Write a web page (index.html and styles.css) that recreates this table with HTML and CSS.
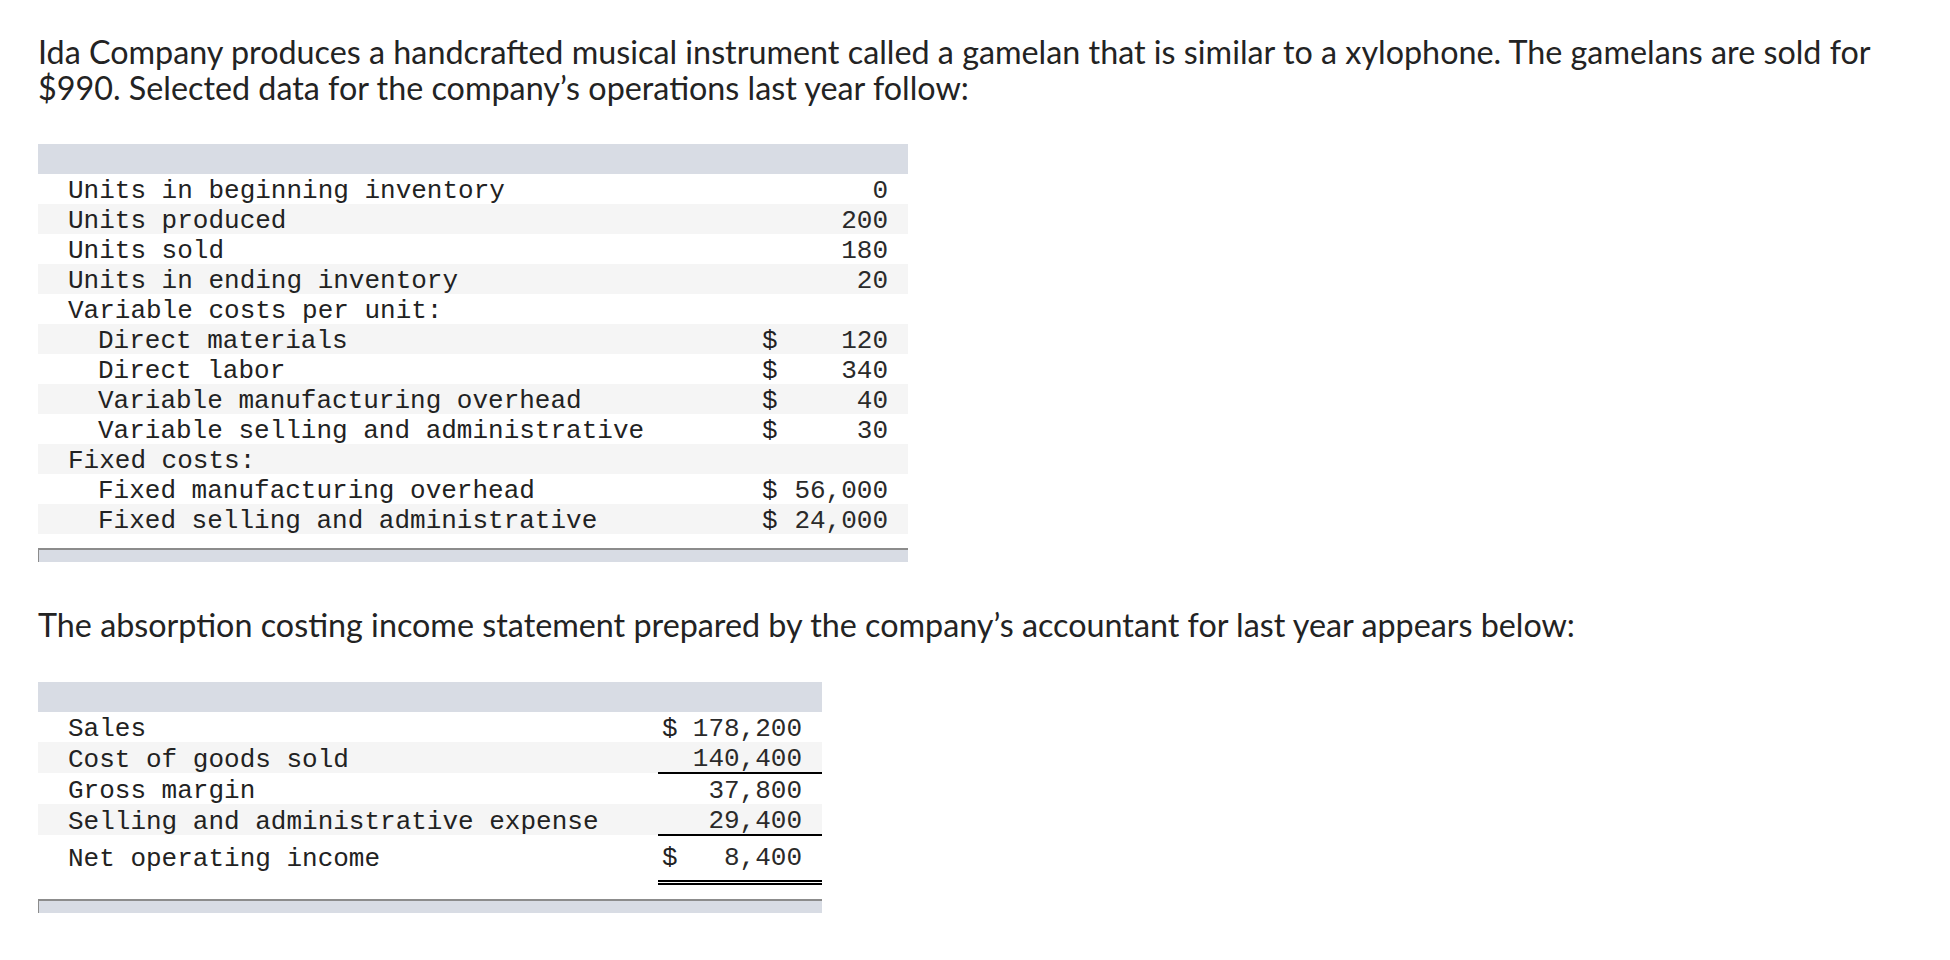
FILE: index.html
```html
<!DOCTYPE html>
<html>
<head>
<meta charset="utf-8">
<link rel="stylesheet" href="styles.css">
</head>
<body>
<div class="page">
  <p class="para para-first">Ida Company produces a handcrafted musical instrument called a gamelan that is similar to a xylophone. The gamelans are sold for $990. Selected data for the company’s operations last year follow:</p>

  <div class="tbl tbl-data">
    <div class="band"></div>
    <table>
      <colgroup><col class="c-lbl"><col class="c-val"></colgroup>
      <tr><td class="lbl">Units in beginning inventory</td><td class="val"><div class="v"><span class="cur"></span><span class="num">0</span></div></td></tr>
      <tr class="alt"><td class="lbl">Units produced</td><td class="val"><div class="v"><span class="cur"></span><span class="num">200</span></div></td></tr>
      <tr><td class="lbl">Units sold</td><td class="val"><div class="v"><span class="cur"></span><span class="num">180</span></div></td></tr>
      <tr class="alt"><td class="lbl">Units in ending inventory</td><td class="val"><div class="v"><span class="cur"></span><span class="num">20</span></div></td></tr>
      <tr><td class="lbl">Variable costs per unit:</td><td class="val"></td></tr>
      <tr class="alt"><td class="lbl ind">Direct materials</td><td class="val"><div class="v"><span class="cur">$</span><span class="num">120</span></div></td></tr>
      <tr><td class="lbl ind">Direct labor</td><td class="val"><div class="v"><span class="cur">$</span><span class="num">340</span></div></td></tr>
      <tr class="alt"><td class="lbl ind">Variable manufacturing overhead</td><td class="val"><div class="v"><span class="cur">$</span><span class="num">40</span></div></td></tr>
      <tr><td class="lbl ind">Variable selling and administrative</td><td class="val"><div class="v"><span class="cur">$</span><span class="num">30</span></div></td></tr>
      <tr class="alt"><td class="lbl">Fixed costs:</td><td class="val"></td></tr>
      <tr><td class="lbl ind">Fixed manufacturing overhead</td><td class="val"><div class="v"><span class="cur">$</span><span class="num">56,000</span></div></td></tr>
      <tr class="alt"><td class="lbl ind">Fixed selling and administrative</td><td class="val"><div class="v"><span class="cur">$</span><span class="num">24,000</span></div></td></tr>
    </table>
    <div class="foot"></div>
  </div>

  <p class="para para-second">The absorption costing income statement prepared by the company’s accountant for last year appears below:</p>

  <div class="tbl tbl-income">
    <div class="band"></div>
    <table>
      <colgroup><col class="c-lbl"><col class="c-val"></colgroup>
      <tr><td class="lbl">Sales</td><td class="val"><div class="v"><span class="cur">$</span><span class="num">178,200</span></div></td></tr>
      <tr class="alt"><td class="lbl">Cost of goods sold</td><td class="val single"><div class="v"><span class="cur"></span><span class="num">140,400</span></div></td></tr>
      <tr><td class="lbl">Gross margin</td><td class="val"><div class="v"><span class="cur"></span><span class="num">37,800</span></div></td></tr>
      <tr class="alt"><td class="lbl">Selling and administrative expense</td><td class="val single"><div class="v"><span class="cur"></span><span class="num">29,400</span></div></td></tr>
      <tr class="total"><td class="lbl">Net operating income</td><td class="val double"><div class="v"><span class="cur">$</span><span class="num">8,400</span></div></td></tr>
    </table>
    <div class="foot"></div>
  </div>
</div>
</body>
</html>
```

FILE: styles.css
```css
html, body {
  margin: 0;
  padding: 0;
  background: #ffffff;
}

.page {
  padding: 34px 38px 0 38px;
  color: #222222;
}

.para {
  margin: 0;
  font-family: Lato, "Open Sans", sans-serif;
  font-size: 32.3px;
  line-height: 36px;
  color: #232323;
}

.para-first {
  width: 1880px;
}

.para-second {
  margin-top: 45px;
}

.tbl {
  display: flex;
  flex-direction: column;
}

.tbl-data {
  width: 870px;
  margin-top: 38px;
}

.tbl-income {
  width: 784px;
  margin-top: 39px;
}

.band {
  height: 30px;
  background: #d8dce4;
}

.foot {
  height: 12px;
  margin-top: 14px;
  background: #d8dce4;
  border-top: 2px solid #8c8c8c;
  border-left: 1px solid #8c8c8c;
}

table {
  border-collapse: collapse;
  width: 100%;
  table-layout: fixed;
}

.tbl-data .c-val {
  width: 146px;
}

.tbl-income .c-val {
  width: 164px;
}

td {
  padding: 4px 0 0 0;
  height: 26px;
  line-height: 26px;
  font-family: "Courier New", Courier, "Nimbus Mono PS", "Nimbus Mono L", FreeMono, "Liberation Mono", monospace;
  font-size: 26px;
  color: #222222;
  white-space: pre;
  vertical-align: middle;
}

tr.alt td {
  background: #f5f5f5;
}

.lbl {
  padding-left: 30px;
}

.lbl.ind {
  padding-left: 60px;
}

.v {
  display: flex;
  justify-content: space-between;
}

.tbl-data .val {
  padding-right: 20px;
}

.tbl-income .val {
  padding-left: 4px;
  padding-right: 20px;
}

.num {
  font-family: "Liberation Mono", monospace;
  font-size: 26px;
  color: #2a2a2a;
}

.val.single {
  border-bottom: 2px solid #000000;
}

tr.total td {
  padding-top: 1px;
  height: 43px;
  line-height: 43px;
}

.val.double {
  border-bottom: 5px double #000000;
}
```
